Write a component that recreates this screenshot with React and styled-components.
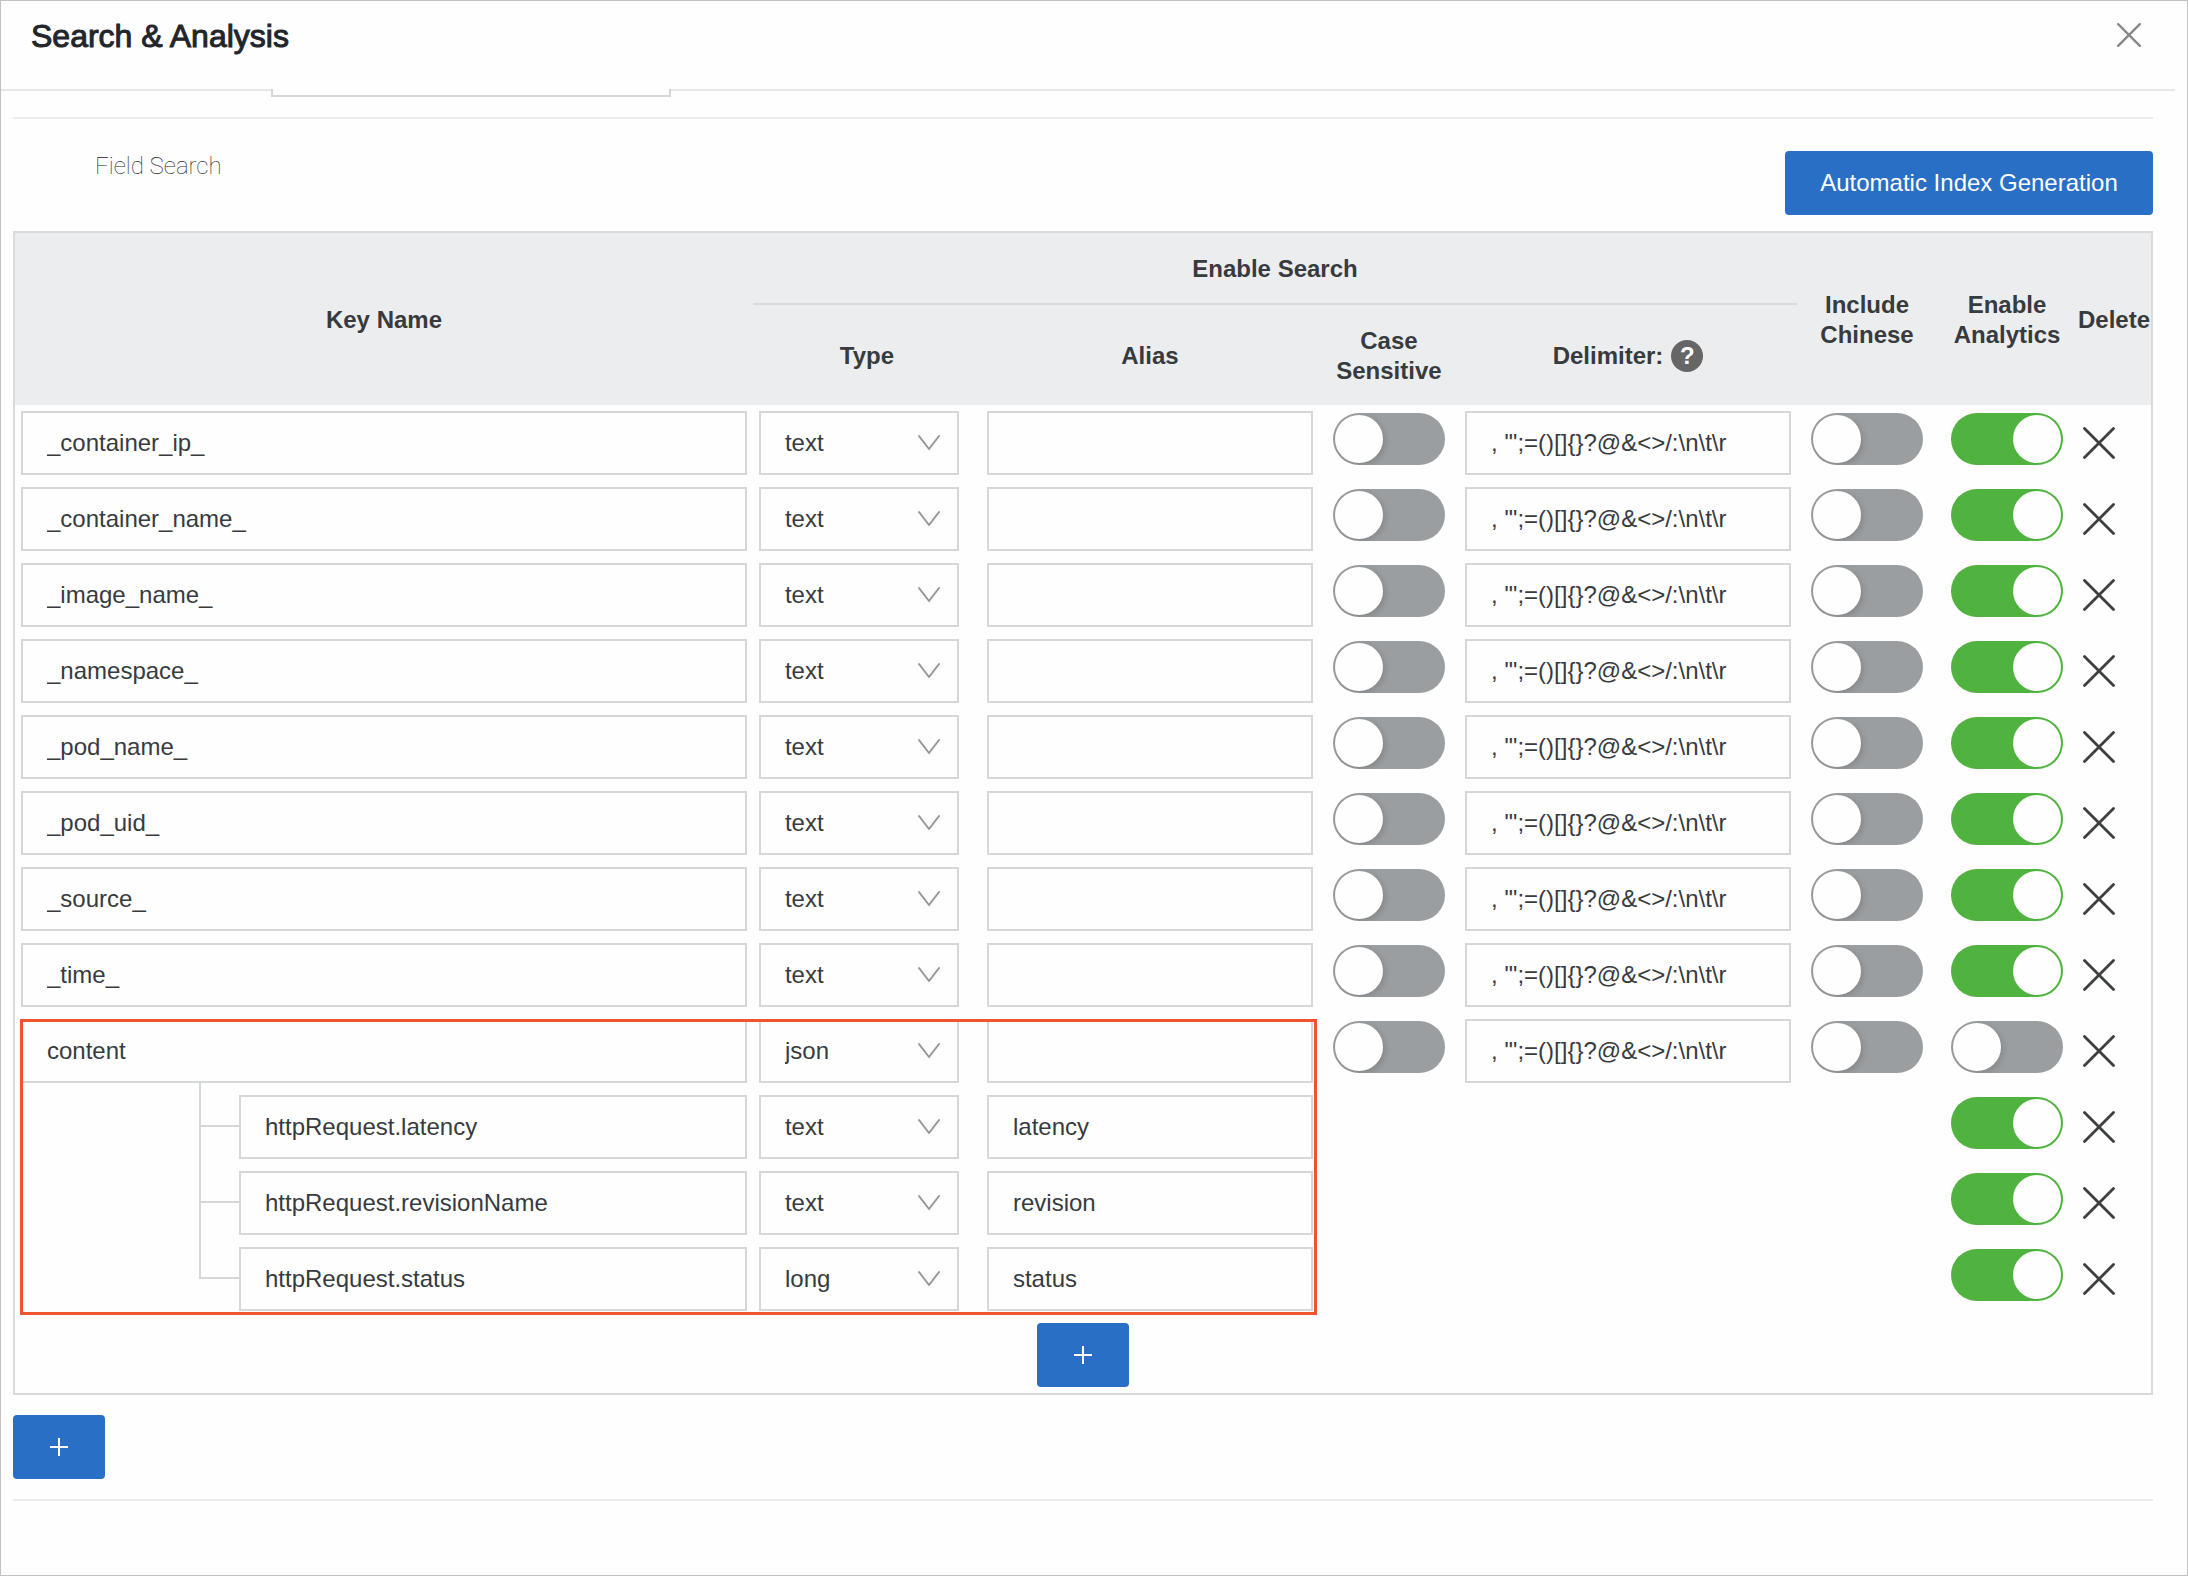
import React, { useState } from 'react';
import styled, { createGlobalStyle } from 'styled-components';

const GlobalStyle = createGlobalStyle`
  *, *::before, *::after {
    box-sizing: border-box;
  }

  body {
    margin: 0;
    background-color: #fefefe;
    color: #373b3e;
    font-family: 'Liberation Sans', Arial, sans-serif;
    font-size: 24px;
    line-height: 30px;
  }

  input, select, button {
    font: inherit;
    color: inherit;
  }
`;

const Panel = styled.main`
  min-height: 100vh;
  min-width: 1600px;
  border: 1px solid #bfc1c3;
`;

const Header = styled.header`
  display: flex;
  align-items: flex-start;
  justify-content: space-between;
  height: 88px;
  padding: 18px 42px 0 30px;
`;

// Regular weight thickened by a stroke, for a medium look
const Title = styled.h1`
  margin: 0;
  color: #222529;
  font-size: 32px;
  font-weight: normal;
  line-height: 34px;
  -webkit-text-stroke: 1px #222529;
`;

const IconButton = styled.button`
  display: flex;
  padding: 0;
  border: none;
  background: none;
  cursor: pointer;
`;

const CloseButton = styled(IconButton)`
  padding: 4px;
`;

// Bottom edge of the field that is scrolled under the header
const ScrollEdge = styled.div`
  display: flex;
  height: 8px;
  margin-right: 12px;
`;

const EdgeLine = styled.div`
  width: ${({ $width }) => $width || 'auto'};
  flex: ${({ $width }) => ($width ? 'none' : '1')};
  border-top: 2px solid #e6e7e8;
`;

const EdgeField = styled.div`
  width: 400px;
  border: 2px solid #d5d8d9;
  border-top: none;
`;

const Content = styled.div`
  padding: 20px 34px 0 12px;
`;

const Divider = styled.hr`
  height: 2px;
  margin: 0;
  border: none;
  background-color: #ebeced;
`;

const SectionHead = styled.div`
  display: flex;
  justify-content: space-between;
  align-items: flex-start;
  padding: 32px 0 16px 82px;
`;

const SectionTitle = styled.h2`
  margin: 0;
  color: #222529;
  font-family: Roboto, 'Liberation Sans', sans-serif;
  font-size: 24px;
  font-weight: 100;
  line-height: 30px;
`;

const PrimaryButton = styled.button`
  display: flex;
  align-items: center;
  justify-content: center;
  width: ${({ $wide }) => ($wide ? '368px' : '92px')};
  height: 64px;
  margin: ${({ $centered }) => ($centered ? '0 auto' : '0')};
  padding: 0;
  border: none;
  border-radius: 4px;
  background-color: #2a6fc6;
  color: #fff;
  cursor: pointer;
`;

const TableFrame = styled.div`
  margin-bottom: 20px;
  border: 2px solid #d8dadc;
`;

const Table = styled.table`
  width: 100%;
  table-layout: fixed;
  border-collapse: separate;
  border-spacing: 0;
`;

const Col = styled.col`
  width: ${({ $width }) => $width};
`;

const Th = styled.th`
  height: ${({ $height }) => $height || 'auto'};
  padding: 2px 0 0;
  border-bottom: ${({ $line }) => ($line ? '2px solid #d8dadc' : 'none')};
  background-color: #ecedef;
  font-weight: bold;
  text-align: center;
  vertical-align: middle;
`;

const ThContent = styled.div`
  display: flex;
  align-items: center;
  justify-content: center;
  gap: 8px;
`;

const HelpBadge = styled.button`
  width: 32px;
  height: 32px;
  padding: 0;
  border: none;
  border-radius: 50%;
  background-color: #666;
  color: #fff;
  font-weight: bold;
  line-height: 32px;
`;

const Group = styled.tbody`
  position: relative;
`;

const Td = styled.td`
  height: 76px;
  padding: ${({ $padding }) => $padding || '6px'};
  vertical-align: top;
`;

const TextInput = styled.input`
  display: block;
  width: 100%;
  min-width: 0;
  height: 64px;
  padding: 0 24px;
  border: 2px solid #d5d8d9;
  border-radius: 0;
  background-color: #fefefe;
  outline: none;

  &:focus {
    border-color: #2a6fc6;
  }
`;

const SelectBox = styled.div`
  display: grid;
  align-items: center;

  > * {
    grid-area: 1 / 1;
  }

  svg {
    justify-self: end;
    margin-right: 18px;
    pointer-events: none;
  }
`;

const Select = styled.select`
  width: 100%;
  height: 64px;
  padding: 0 24px;
  border: 2px solid #d5d8d9;
  border-radius: 0;
  background-color: #fefefe;
  appearance: none;
  outline: none;
`;

const Switch = styled.input.attrs({ type: 'checkbox', role: 'switch' })`
  display: flex;
  width: 112px;
  height: 52px;
  margin: 0;
  padding: 2px;
  border-radius: 26px;
  background-color: #9b9ea0;
  appearance: none;
  overflow: hidden;
  cursor: pointer;

  &::before {
    content: '';
    width: 48px;
    height: 48px;
    border-radius: 50%;
    background-color: #fefefe;
    box-shadow: 2px 2px 6px rgba(0, 0, 0, 0.15);
  }

  &:checked {
    justify-content: flex-end;
    background-color: #50b23f;
  }

  &:checked::before {
    box-shadow: none;
  }
`;

const ChildKey = styled.div`
  display: flex;
  align-items: flex-start;
  padding-left: 178px;
`;

// Branch of the tree: reaches up to the parent field or to the previous branch
const Branch = styled.div`
  flex: none;
  width: 40px;
  height: ${({ $first }) => ($first ? '44px' : '76px')};
  margin-top: ${({ $first }) => ($first ? '-12px' : '-44px')};
  border-left: 2px solid #d5d8d9;
  border-bottom: 2px solid #d5d8d9;
`;

// Frame drawn over the key, type and alias columns of the json group
const Highlight = styled.div`
  position: absolute;
  top: 6px;
  right: 834px;
  bottom: 2px;
  left: 5px;
  border: 3px solid #f0532f;
  pointer-events: none;
`;

const CrossIcon = ({ size, color, width }) => (
  <svg width={size} height={size} viewBox="0 0 32 32" fill="none" stroke={color} strokeWidth={width} strokeLinecap="round">
    <path d="M1.5 1.5L30.5 30.5" />
    <path d="M30.5 1.5L1.5 30.5" />
  </svg>
);

const PlusIcon = () => (
  <svg width="18" height="18" viewBox="0 0 18 18" stroke="#fff" strokeWidth="2">
    <path d="M9 0V18M0 9H18" />
  </svg>
);

const ChevronIcon = () => (
  <svg width="24" height="18" viewBox="0 0 24 18" fill="none" stroke="#94979a" strokeWidth="2" strokeLinecap="round" strokeLinejoin="round">
    <path d="M2 2L12 15L22 2" />
  </svg>
);

const delimiter = ', \'";=()[]{}?@&<>/:\\n\\t\\r';

const initialKeys = [
  '_container_ip_',
  '_container_name_',
  '_image_name_',
  '_namespace_',
  '_pod_name_',
  '_pod_uid_',
  '_source_',
  '_time_',
];

const initialChildren = [
  { key: 'httpRequest.latency', type: 'text', alias: 'latency' },
  { key: 'httpRequest.revisionName', type: 'text', alias: 'revision' },
  { key: 'httpRequest.status', type: 'long', alias: 'status' },
];

const TypeSelect = ({ value, name }) => (
  <SelectBox>
    <Select defaultValue={value} aria-label={`Type of ${name}`}>
      <option>text</option>
      <option>long</option>
      <option>double</option>
      <option>json</option>
    </Select>
    <ChevronIcon />
  </SelectBox>
);

const DeleteCell = ({ name, onDelete }) => (
  <Td $padding="22px 6px">
    <IconButton type="button" aria-label={`Delete ${name}`} onClick={onDelete}>
      <CrossIcon size={32} color="#3a3e41" width={2.8} />
    </IconButton>
  </Td>
);

const FieldRow = ({ name, type, analytics, onDelete, children }) => (
  <tr>
    <Td>
      <TextInput type="text" defaultValue={name} aria-label="Key Name" />
      {children}
    </Td>
    <Td $padding="6px 22px 6px 6px">
      <TypeSelect value={type} name={name} />
    </Td>
    <Td>
      <TextInput type="text" aria-label={`Alias of ${name}`} />
    </Td>
    <Td $padding="8px 14px">
      <Switch aria-label={`Case Sensitive ${name}`} />
    </Td>
    <Td>
      <TextInput type="text" defaultValue={delimiter} aria-label={`Delimiter of ${name}`} />
    </Td>
    <Td $padding="8px 14px">
      <Switch aria-label={`Include Chinese ${name}`} />
    </Td>
    <Td $padding="8px 14px">
      <Switch defaultChecked={analytics} aria-label={`Enable Analytics ${name}`} />
    </Td>
    <DeleteCell name={name} onDelete={onDelete} />
  </tr>
);

const ChildRow = ({ field, first, onDelete }) => (
  <tr>
    <Td>
      <ChildKey>
        <Branch $first={first} />
        <TextInput type="text" defaultValue={field.key} aria-label="Key Name" />
      </ChildKey>
    </Td>
    <Td $padding="6px 22px 6px 6px">
      <TypeSelect value={field.type} name={field.key} />
    </Td>
    <Td>
      <TextInput type="text" defaultValue={field.alias} aria-label={`Alias of ${field.key}`} />
    </Td>
    <Td colSpan={3} />
    <Td $padding="8px 14px">
      <Switch defaultChecked aria-label={`Enable Analytics ${field.key}`} />
    </Td>
    <DeleteCell name={field.key} onDelete={onDelete} />
  </tr>
);

const App = () => {
  const [keys, setKeys] = useState(initialKeys);
  const [hasContent, setHasContent] = useState(true);
  const [childFields, setChildFields] = useState(initialChildren);

  const removeKey = (name) => setKeys(keys.filter((key) => key !== name));

  const removeChild = (name) => setChildFields(childFields.filter((field) => field.key !== name));

  const addKey = () => setKeys([...keys, `key_${keys.length + 1}`]);

  const addChild = () =>
    setChildFields([...childFields, { key: `key_${childFields.length + 1}`, type: 'text', alias: '' }]);

  return (
    <>
      <GlobalStyle />
      <Panel>
        <Header>
          <Title>Search &amp; Analysis</Title>
          <CloseButton type="button" aria-label="Close">
            <CrossIcon size={24} color="#85888b" width={3} />
          </CloseButton>
        </Header>
        <ScrollEdge>
          <EdgeLine $width="270px" />
          <EdgeField />
          <EdgeLine />
        </ScrollEdge>

        <Content>
          <Divider />
          <SectionHead>
            <SectionTitle>Field Search</SectionTitle>
            <PrimaryButton type="button" $wide>
              Automatic Index Generation
            </PrimaryButton>
          </SectionHead>

          <TableFrame>
            <Table>
              <colgroup>
                <Col />
                <Col $width="228px" />
                <Col $width="338px" />
                <Col $width="140px" />
                <Col $width="338px" />
                <Col $width="140px" />
                <Col $width="140px" />
                <Col $width="74px" />
              </colgroup>
              <thead>
                <tr>
                  <Th rowSpan={2}>Key Name</Th>
                  <Th colSpan={4} $height="72px" $line>Enable Search</Th>
                  <Th rowSpan={2}>Include<br />Chinese</Th>
                  <Th rowSpan={2}>Enable<br />Analytics</Th>
                  <Th rowSpan={2}>Delete</Th>
                </tr>
                <tr>
                  <Th $height="100px">Type</Th>
                  <Th>Alias</Th>
                  <Th>Case<br />Sensitive</Th>
                  <Th>
                    <ThContent>
                      Delimiter:
                      <HelpBadge type="button">?</HelpBadge>
                    </ThContent>
                  </Th>
                </tr>
              </thead>
              <tbody>
                {keys.map((name) => (
                  <FieldRow key={name} name={name} type="text" analytics onDelete={() => removeKey(name)} />
                ))}
              </tbody>
              {hasContent && (
                <Group>
                  <FieldRow name="content" type="json" onDelete={() => setHasContent(false)}>
                    <Highlight />
                  </FieldRow>
                  {childFields.map((field, index) => (
                    <ChildRow
                      key={field.key}
                      field={field}
                      first={index === 0}
                      onDelete={() => removeChild(field.key)}
                    />
                  ))}
                </Group>
              )}
              <tfoot>
                <tr>
                  <Td colSpan={8}>
                    <PrimaryButton type="button" $centered aria-label="Add sub field" onClick={addChild}>
                      <PlusIcon />
                    </PrimaryButton>
                  </Td>
                </tr>
              </tfoot>
            </Table>
          </TableFrame>

          <PrimaryButton type="button" aria-label="Add field" onClick={addKey}>
            <PlusIcon />
          </PrimaryButton>
        </Content>
        <Content>
          <Divider />
        </Content>
      </Panel>
    </>
  );
};

export default App;
